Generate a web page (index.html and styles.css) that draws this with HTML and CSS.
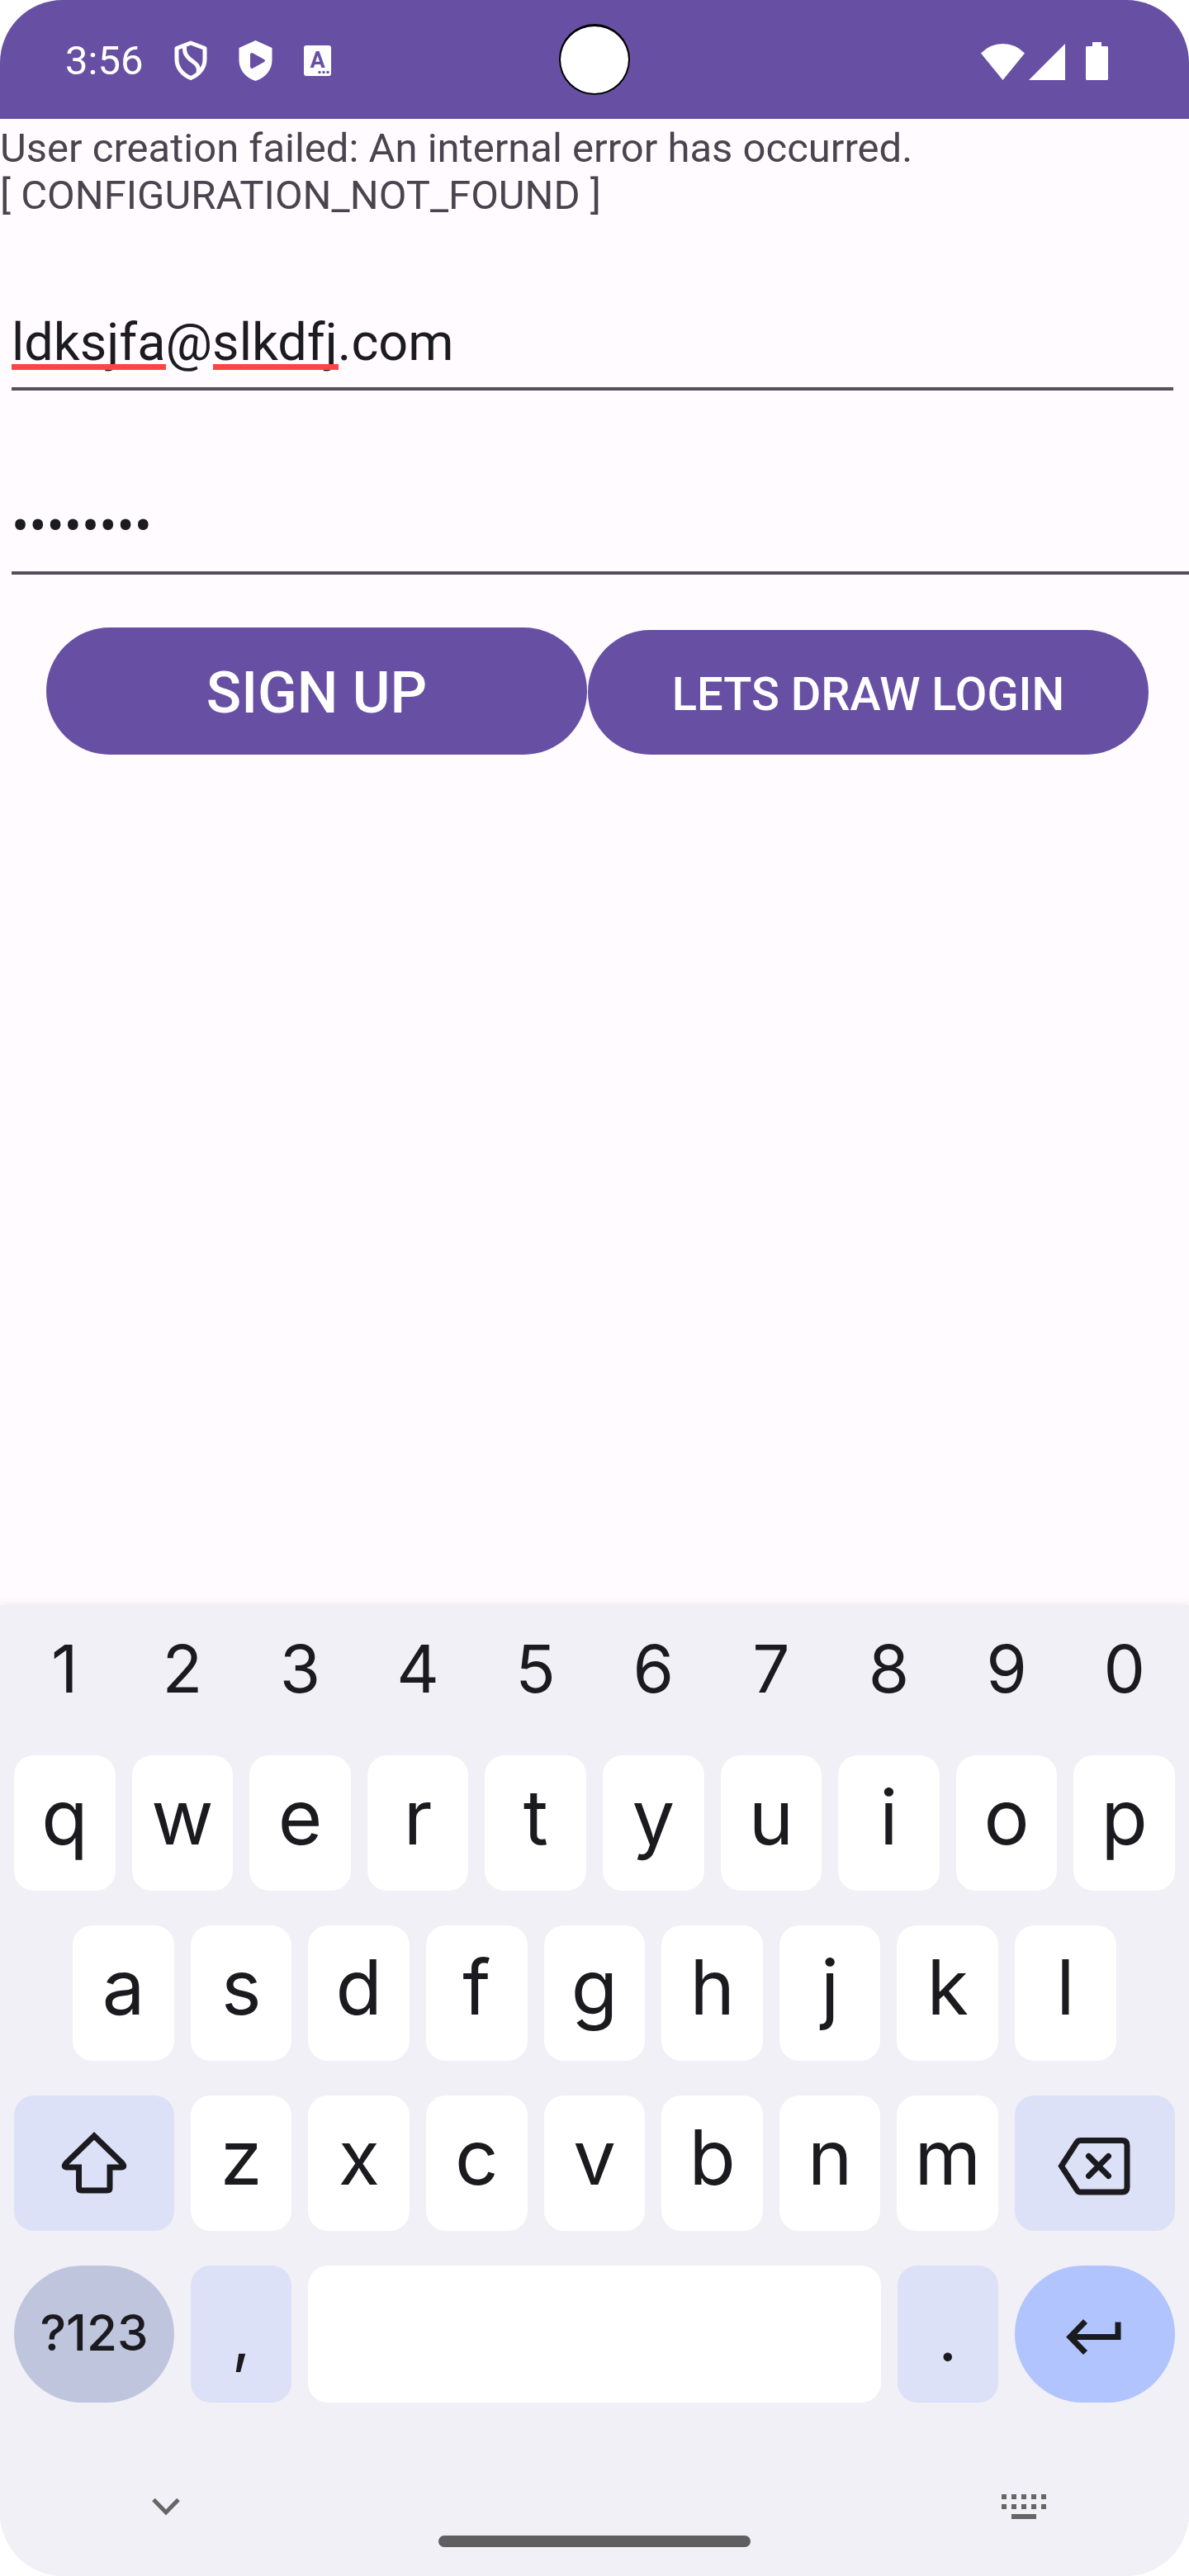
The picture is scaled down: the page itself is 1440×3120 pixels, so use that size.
FILE: index.html
```html
<!DOCTYPE html>
<html lang="en">
<head>
<meta charset="utf-8">
<meta name="viewport" content="width=device-width, initial-scale=1">
<title>Lets Draw</title>
<link rel="stylesheet" href="styles.css">
</head>
<body>
<div class="screen">
  <header class="status">
    <div class="status-group status-left">
      <time class="clock">3:56</time>
      <svg width="40" height="49" viewBox="0 0 40 49" fill="none" stroke="#fff" stroke-width="5" aria-hidden="true">
        <path d="M20 3 37 9.500V23C37 33 30 41.500 20 45.500 10 41.500 3 33 3 23V9.500Z" stroke-linejoin="round"/>
        <path d="M12.500 6C12 17 15 19 20 23.500 27 28.500 31 32 29 39"/>
      </svg>
      <svg width="41" height="49" viewBox="0 0 41 49" aria-hidden="true">
        <path fill="#fff" fill-rule="evenodd" d="M20.500 0 40.500 9V24C40.500 35 33 45 20.500 49 8 45 .5 35 .5 24V9ZM14 17V32Q14.500 35 17.500 33.500L31 26Q33 24.500 31 23L17.500 15.500Q14.500 14 14 17Z"/>
      </svg>
      <svg width="33" height="37" viewBox="0 0 33 37" aria-hidden="true">
        <rect width="33" height="37" rx="3" fill="#fff"/>
        <text x="16.500" y="27" class="badge-letter" text-anchor="middle">A</text>
        <circle cx="19" cy="32.500" r="1.700" fill="#6750a3"/><circle cx="24" cy="32.500" r="1.700" fill="#6750a3"/><circle cx="29" cy="32.500" r="1.700" fill="#6750a3"/>
      </svg>
    </div>
    <div class="camera"></div>
    <div class="status-group status-right">
      <svg width="53" height="46" viewBox="0 0 53 46" fill="#fff" aria-hidden="true"><path d="M0 13.500Q11 2 26.500 2T53 13.500L26.500 46Z"/></svg>
      <svg width="44" height="46" viewBox="0 0 44 46" fill="#fff" aria-hidden="true"><path d="M0 46 44 2V46Z"/></svg>
      <svg class="battery" width="27" height="46" viewBox="0 0 27 46" fill="#fff" aria-hidden="true"><path d="M8 0H19V5H26L27 6V45L26 46H1L0 45V6L1 5H8Z"/></svg>
    </div>
  </header>

  <main class="app">
    <p class="message" role="alert">User creation failed: An internal error has occurred.<br>[ CONFIGURATION_NOT_FOUND ]</p>
    <form class="form">
      <div class="field field-email">
        <input id="email" class="input" type="email" value="ldksjfa@slkdfj.com" spellcheck="false" aria-label="Email">
        <span class="typo typo-user"></span>
        <span class="typo typo-host"></span>
      </div>
      <div class="field field-password">
        <input id="password" class="input" type="password" value="drawings" aria-label="Password">
      </div>
      <div class="actions">
        <button class="button button-signup" type="button">SIGN UP</button>
        <button class="button button-login" type="button">LETS DRAW LOGIN</button>
      </div>
    </form>
  </main>

  <section class="keyboard" aria-label="Keyboard">
    <div class="row row-numbers">
      <button class="key number">1</button><button class="key number">2</button><button class="key number">3</button><button class="key number">4</button><button class="key number">5</button><button class="key number">6</button><button class="key number">7</button><button class="key number">8</button><button class="key number">9</button><button class="key number">0</button>
    </div>
    <div class="row">
      <button class="key">q</button><button class="key">w</button><button class="key">e</button><button class="key">r</button><button class="key">t</button><button class="key">y</button><button class="key">u</button><button class="key">i</button><button class="key">o</button><button class="key">p</button>
    </div>
    <div class="row row-home">
      <button class="key">a</button><button class="key">s</button><button class="key">d</button><button class="key">f</button><button class="key">g</button><button class="key">h</button><button class="key">j</button><button class="key">k</button><button class="key">l</button>
    </div>
    <div class="row">
      <button class="key soft wide" aria-label="Shift">
        <svg width="80" height="78" viewBox="13 21 80 78" fill="none" stroke="#1b1b1f" stroke-width="7" aria-hidden="true"><path d="M53 27 19 60Q15 64.500 20 65H34.500V90Q34.500 93 37.500 93H69Q72 93 72 90V65H86Q91 64.500 87 60Z"/></svg>
      </button>
      <button class="key">z</button><button class="key">x</button><button class="key">c</button><button class="key">v</button><button class="key">b</button><button class="key">n</button><button class="key">m</button>
      <button class="key soft wide" aria-label="Backspace">
        <svg width="90" height="84" viewBox="20 8 90 84" fill="none" stroke="#1b1b1f" stroke-width="7" aria-hidden="true"><path d="M24.500 53.500 43 25Q44.500 22.500 47.500 22.500H98Q104 22.500 104 28.500V79Q104 85 98 85H47.500Q44.500 85 43 82Z"/><path d="M57.500 41.500 81.500 65.500M81.500 41.500 57.500 65.500" stroke-linecap="round"/></svg>
      </button>
    </div>
    <div class="row row-bottom">
      <button class="key symbols wide">?123</button>
      <button class="key soft punct">,</button>
      <button class="key space" aria-label="Space"></button>
      <button class="key soft punct">.</button>
      <button class="key enter wide" aria-label="Enter">
        <svg width="80" height="50" viewBox="25 232 80 50" fill="none" stroke="#1b1b1f" stroke-width="7" aria-hidden="true"><path d="M36 260.500H93V242.500M53.500 241.500 35 260.500 53.500 279.500"/></svg>
      </button>
    </div>
    <nav class="system">
      <button class="system-button" aria-label="Hide keyboard">
        <svg width="34" height="30" viewBox="0 0 34 30" fill="none" stroke="#666" stroke-width="5" aria-hidden="true"><path d="M2 6.500 17 22 32 6.500"/></svg>
      </button>
      <button class="system-button" aria-label="Switch keyboard">
        <svg width="54" height="30" viewBox="0 0 54 30" fill="#666" aria-hidden="true"><path d="M0 0h6v6H0zM12 0h6v6h-6zM24 0h6v6h-6zM36 0h6v6h-6zM48 0h6v6h-6zM0 12h6v6H0zM12 12h6v6h-6zM24 12h6v6h-6zM36 12h6v6h-6zM48 12h6v6h-6zM12 24h30v6H12z"/></svg>
      </button>
    </nav>
    <div class="gesture"></div>
  </section>
</div>
</body>
</html>
```
FILE: styles.css
```css
* { box-sizing: border-box; }

body {
  margin: 0;
  background: #fff;
  font-family: Roboto, "Liberation Sans", sans-serif;
}

button { border: 0; margin: 0; padding: 0; }

svg { display: block; flex: none; }

.screen {
  display: flex;
  flex-direction: column;
  min-height: 100vh;
  border-radius: 76px;
  overflow: hidden;
  background: #fffbff;
}

/* Status bar */
.status {
  display: grid;
  grid-template-columns: 1fr auto 1fr;
  align-items: center;
  height: 144px;
  padding: 3px 98px 0 79px;
  background: #6750a3;
  color: #fff;
  position: relative;
}

.status-group { display: flex; align-items: center; }
.status-left { gap: 38px; }
.status-right { gap: 5px; grid-column: 3; justify-content: flex-end; }
.battery { margin-left: 20px; }
.clock { font-size: 49px; line-height: 57px; }
.badge-letter { font: 700 27px Roboto, sans-serif; fill: #6750a3; }

.camera {
  position: absolute;
  top: 29px;
  left: 50%;
  width: 86px;
  height: 86px;
  margin-left: -43px;
  border: 2px solid #000;
  border-top-width: 3px;
  border-radius: 50%;
  background: #fff;
}

/* Sign-up form */
.app { flex: 1; }

.message {
  margin: 0;
  padding-top: 7px;
  font-size: 49px;
  line-height: 57px;
  color: #49454f;
}

.field { position: relative; margin-left: 14px; }
.field-email { margin-top: 107px; margin-right: 19px; }
.field-password { margin-top: 122px; }

.input {
  display: block;
  width: 100%;
  padding: 0 0 13px;
  border: 0;
  border-bottom: 4px solid #55515a;
  border-radius: 0;
  outline: 0;
  background: transparent;
  height: 101px;
  font: 400 63px/84px Roboto, "Liberation Sans", sans-serif;
  color: #1c1b1f;
}

.typo {
  position: absolute;
  top: 69px;
  height: 7px;
  background: #ff4444;
}
.typo-user { left: 0; width: 187px; }
.typo-host { left: 244px; width: 152px; }

.actions {
  display: flex;
  align-items: flex-end;
  gap: 1px;
  margin-top: 64px;
  padding: 0 49px 0 56px;
}

.button {
  padding-top: 4px;
  border-radius: 77px;
  background: #6750a3;
  color: #fff;
  font-family: inherit;
  font-weight: 500;
}
.button-signup { flex: 655 1 0; height: 154px; font-size: 70px; }
.button-login { flex: 679 1 0; height: 151px; font-size: 56px; }

/* Keyboard */
.keyboard {
  padding: 14px 0 35px;
  background: #f0f0f6;
  box-shadow: 0 0 10px rgba(60, 40, 60, 0.1);
}

.row {
  display: grid;
  grid-template-columns: repeat(20, 1fr);
  grid-auto-rows: 164px;
  column-gap: 20px;
  margin-bottom: 42px;
  padding: 0 17px;
}
.row-numbers { grid-auto-rows: 126px; }
.row-home .key:first-child { grid-column-start: 2; }
.row-bottom { grid-auto-rows: 166px; margin-bottom: 0; }

.key {
  grid-column-end: span 2;
  display: flex;
  align-items: center;
  justify-content: center;
  padding-bottom: 14px;
  border-radius: 24px;
  background: #fff;
  color: #1b1b1f;
  font-family: Inter, "Open Sans", sans-serif;
  font-size: 92px;
  line-height: 112px;
}
.number { padding: 0; background: transparent; font-size: 80px; }
.soft { background: #dde1f8; }
.punct { padding: 6px 0 0; font-size: 80px; }
.wide { grid-column-end: span 3; padding: 0; }
.space { grid-column-end: span 10; }
.symbols {
  padding-bottom: 4px;
  border-radius: 83px;
  background: #c0c5de;
  font-size: 60px;
  font-weight: 500;
}
.enter { border-radius: 83px; background: #b1c4fe; }

.system {
  display: flex;
  justify-content: space-between;
  padding: 111px 173px 0 184px;
}
.system-button { background: transparent; }

.gesture {
  width: 378px;
  height: 14px;
  margin: 20px auto 0;
  border-radius: 7px;
  background: #5f5f61;
}
```
